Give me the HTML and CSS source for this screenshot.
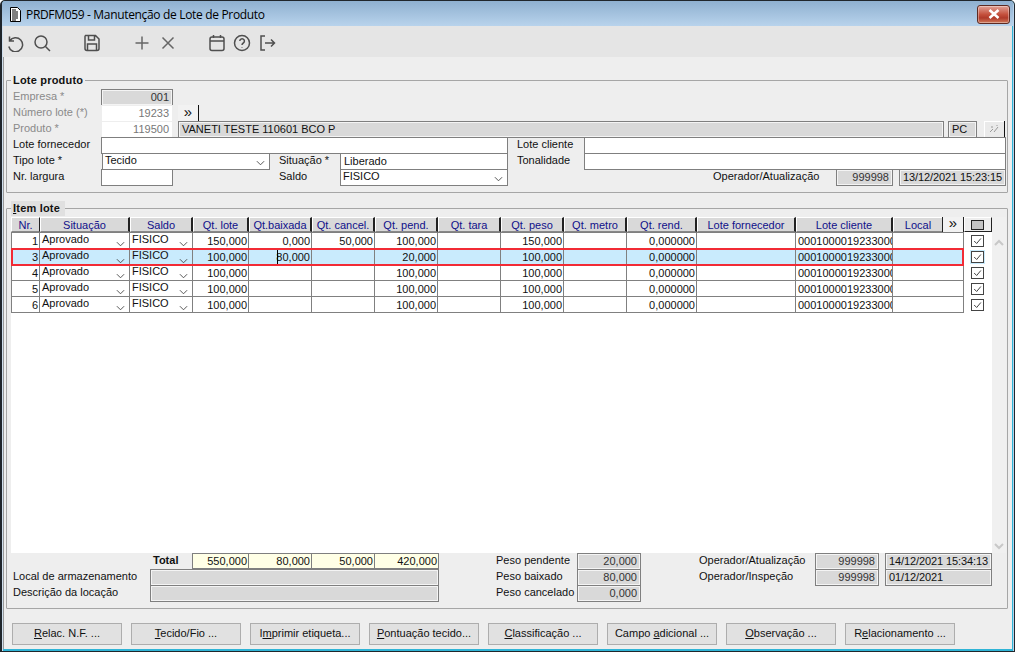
FILE: index.html
```html
<!DOCTYPE html>
<html lang="pt">
<head>
<meta charset="utf-8">
<title>PRDFM059</title>
<link rel="stylesheet" href="styles.css">
</head>
<body>
<div class="window">
  <header class="titlebar">
    <svg class="app-icon" width="14" height="15" viewBox="0 0 14 15"><path d="M2.5.5h7l3 3v11h-10z" fill="#fff" stroke="#000"/><path d="M4 3h4M4 5h6M4 7h6M4 9h6M4 11h6M4 13h4" stroke="#000"/></svg>
    <span class="title-text">PRDFM059 - Manutenção de Lote de Produto</span>
    <span class="close-btn"><svg width="14" height="10" viewBox="0 0 14 10"><path d="M2.5 1l9 8M11.500 1l-9 8" stroke="#fff" stroke-width="2.600"/></svg></span>
  </header>
  <nav class="toolbar">
    <svg class="tool t-undo" viewBox="0 0 18 18"><path d="M3.500 2.500v4.500h4.500M3.700 7a7 7 0 1 1-.9 5.500"/></svg>
    <svg class="tool t-search" viewBox="0 0 18 18"><circle cx="8" cy="8" r="6"/><path d="M12.500 12.500l4.500 4.500"/></svg>
    <svg class="tool t-save" viewBox="0 0 18 18"><path d="M2.500 1.500h10l3.500 3.500v9.500a2 2 0 0 1-2 2h-10a2 2 0 0 1-2-2v-11.500a1.500 1.500 0 0 1 .5-1.500zM5.500 1.500v4.500h6v-4.500M4.500 16.500v-6.500h9v6.500"/></svg>
    <svg class="tool t-plus" viewBox="0 0 18 18"><path d="M9 2.500v13M2.500 9h13"/></svg>
    <svg class="tool t-times" viewBox="0 0 18 18"><path d="M3.500 3.500l11 11M14.500 3.500l-11 11"/></svg>
    <svg class="tool t-cal" viewBox="0 0 18 18"><rect x="2" y="3" width="14" height="13.500" rx="2"/><path d="M2 7h14M5.500 1v3M12.500 1v3"/></svg>
    <svg class="tool t-help" viewBox="0 0 18 18"><circle cx="9" cy="9" r="7.500"/><path d="M6.800 7a2.300 2.300 0 1 1 3.500 2c-.8.500-1.300 1-1.300 2M9 13v.5"/></svg>
    <svg class="tool t-exit" viewBox="0 0 18 18"><path d="M6 2h-4v14h4M6 9h9.500M12 5.500l3.500 3.500-3.500 3.500"/></svg>
  </nav>
  <main class="content">
    <section class="group group-lote">
      <h2 class="legend">Lote produto</h2>
      <div class="form-grid">
        <span class="lbl off c-a r1">Empresa *</span>
        <span class="fld ro num c-b r1">001</span>
        <span class="lbl off c-a r2">Número lote (*)</span>
        <span class="fld plain num dim c-b r2">19233</span>
        <span class="mini-btn c-arrow r2">»</span>
        <span class="lbl off c-a r3">Produto *</span>
        <span class="fld plain num dim c-b r3">119500</span>
        <span class="fld ro c-prod r3">VANETI TESTE 110601 BCO P</span>
        <span class="fld ro c-un r3">PC</span>
        <span class="mini-btn light c-wand r3"><svg width="12" height="10" viewBox="0 0 12 10"><path d="M2 8l3-3M6 8l4-5M4 2v2M9 1v1" stroke="#999" fill="none"/></svg></span>
        <span class="lbl c-a r4">Lote fornecedor</span>
        <span class="fld c-forn r4"></span>
        <span class="lbl c-lc r4">Lote cliente</span>
        <span class="fld c-lcv r4"></span>
        <span class="lbl c-a r5">Tipo lote *</span>
        <span class="fld sel c-tipo r5">Tecido<svg class="chev" viewBox="0 0 10 6"><path d="M1 1l4 4 4-4"/></svg></span>
        <span class="lbl c-sit r5">Situação *</span>
        <span class="fld c-sitv r5">Liberado</span>
        <span class="lbl c-lc r5">Tonalidade</span>
        <span class="fld c-lcv r5"></span>
        <span class="lbl c-a r6">Nr. largura</span>
        <span class="fld c-b r6"></span>
        <span class="lbl c-sit r6">Saldo</span>
        <span class="fld sel c-sitv r6">FISICO<svg class="chev" viewBox="0 0 10 6"><path d="M1 1l4 4 4-4"/></svg></span>
        <span class="lbl c-op r6">Operador/Atualização</span>
        <span class="fld ro num c-opv r6">999998</span>
        <span class="fld ro stamp c-date r6">13/12/2021 15:23:15</span>
      </div>
    </section>

    <section class="group group-item">
      <h2 class="legend focus"><u>I</u>tem lote</h2>
      <div class="grid-area">
        <div class="grid-main">
          <div class="grid-body">
            <div class="row head">
              <span>Nr.</span><span>Situação</span><span>Saldo</span><span>Qt. lote</span><span>Qt.baixada</span><span>Qt. cancel.</span><span>Qt. pend.</span><span>Qt. tara</span><span>Qt. peso</span><span>Qt. metro</span><span>Qt. rend.</span><span>Lote fornecedor</span><span>Lote cliente</span><span class="local-head"><em>Local</em><b>»</b></span>
              <span class="check-head"><i></i></span>
            </div>
            <div class="row data">
              <span class="num">1</span><span class="sl">Aprovado<svg class="chev" viewBox="0 0 10 6"><path d="M1 1l4 4 4-4"/></svg></span><span class="sl">FISICO<svg class="chev" viewBox="0 0 10 6"><path d="M1 1l4 4 4-4"/></svg></span><span class="num">150,000</span><span class="num">0,000</span><span class="num">50,000</span><span class="num">100,000</span><span></span><span class="num">150,000</span><span></span><span class="num">0,000000</span><span></span><span class="clip">0001000019233000</span><span></span>
              <span class="chk"><svg viewBox="0 0 12 12"><path d="M2 6l3 3 5-6"/></svg></span>
            </div>
            <div class="row data selected">
              <span class="num">3</span><span class="sl">Aprovado<svg class="chev" viewBox="0 0 10 6"><path d="M1 1l4 4 4-4"/></svg></span><span class="sl">FISICO<svg class="chev" viewBox="0 0 10 6"><path d="M1 1l4 4 4-4"/></svg></span><span class="num">100,000</span><span class="num edit"><s></s>80,000</span><span></span><span class="num">20,000</span><span></span><span class="num">100,000</span><span></span><span class="num">0,000000</span><span></span><span class="clip">0001000019233000</span><span></span>
              <span class="chk"><svg viewBox="0 0 12 12"><path d="M2 6l3 3 5-6"/></svg></span>
            </div>
            <div class="row data">
              <span class="num">4</span><span class="sl">Aprovado<svg class="chev" viewBox="0 0 10 6"><path d="M1 1l4 4 4-4"/></svg></span><span class="sl">FISICO<svg class="chev" viewBox="0 0 10 6"><path d="M1 1l4 4 4-4"/></svg></span><span class="num">100,000</span><span></span><span></span><span class="num">100,000</span><span></span><span class="num">100,000</span><span></span><span class="num">0,000000</span><span class="dark-bottom"></span><span class="clip">0001000019233000</span><span></span>
              <span class="chk"><svg viewBox="0 0 12 12"><path d="M2 6l3 3 5-6"/></svg></span>
            </div>
            <div class="row data">
              <span class="num">5</span><span class="sl">Aprovado<svg class="chev" viewBox="0 0 10 6"><path d="M1 1l4 4 4-4"/></svg></span><span class="sl">FISICO<svg class="chev" viewBox="0 0 10 6"><path d="M1 1l4 4 4-4"/></svg></span><span class="num">100,000</span><span></span><span></span><span class="num">100,000</span><span></span><span class="num">100,000</span><span></span><span class="num">0,000000</span><span></span><span class="clip">0001000019233000</span><span></span>
              <span class="chk"><svg viewBox="0 0 12 12"><path d="M2 6l3 3 5-6"/></svg></span>
            </div>
            <div class="row data">
              <span class="num">6</span><span class="sl">Aprovado<svg class="chev" viewBox="0 0 10 6"><path d="M1 1l4 4 4-4"/></svg></span><span class="sl">FISICO<svg class="chev" viewBox="0 0 10 6"><path d="M1 1l4 4 4-4"/></svg></span><span class="num">100,000</span><span></span><span></span><span class="num">100,000</span><span></span><span class="num">100,000</span><span></span><span class="num">0,000000</span><span></span><span class="clip">0001000019233000</span><span></span>
              <span class="chk"><svg viewBox="0 0 12 12"><path d="M2 6l3 3 5-6"/></svg></span>
            </div>
          </div>
          <div class="scrollbar">
            <svg viewBox="0 0 12 8"><path d="M2 6l4-4 4 4"/></svg>
            <svg viewBox="0 0 12 8"><path d="M2 2l4 4 4-4"/></svg>
          </div>
        </div>
        <div class="summary">
          <span class="lbl total-lbl">Total</span>
          <span class="tot t1">550,000</span><span class="tot t2">80,000</span><span class="tot t3">50,000</span><span class="tot t4">420,000</span>
          <span class="lbl s-a s2">Local de armazenamento</span>
          <span class="fld ro s-wide s2"></span>
          <span class="lbl s-a s3">Descrição da locação</span>
          <span class="fld ro s-wide s3"></span>
          <span class="lbl s-p s1">Peso pendente</span><span class="fld ro num s-pv s1">20,000</span>
          <span class="lbl s-p s2">Peso baixado</span><span class="fld ro num s-pv s2">80,000</span>
          <span class="lbl s-p s3">Peso cancelado</span><span class="fld ro num s-pv s3">0,000</span>
          <span class="lbl s-o s1">Operador/Atualização</span><span class="fld ro num s-ov s1">999998</span><span class="fld ro stamp s-d s1">14/12/2021 15:34:13</span>
          <span class="lbl s-o s2">Operador/Inspeção</span><span class="fld ro num s-ov s2">999998</span><span class="fld ro stamp s-d s2">01/12/2021</span>
        </div>
      </div>
    </section>

    <footer class="actions">
      <button class="btn"><u>R</u>elac. N.F. ...</button>
      <button class="btn"><u>T</u>ecido/Fio ...</button>
      <button class="btn">I<u>m</u>primir etiqueta...</button>
      <button class="btn"><u>P</u>ontuação tecido...</button>
      <button class="btn"><u>C</u>lassificação ...</button>
      <button class="btn">Campo <u>a</u>dicional ...</button>
      <button class="btn"><u>O</u>bservação ...</button>
      <button class="btn">R<u>e</u>lacionamento ...</button>
    </footer>
  </main>
</div>
</body>
</html>
```
FILE: styles.css
```css
* { box-sizing: border-box; }
html, body { margin: 0; padding: 0; background: #fff; }
body { width: 1015px; height: 652px; overflow: hidden; font: 11px/16px "Liberation Sans", Arial, sans-serif; color: #111; }

.window { width: 1015px; height: 652px; display: flex; flex-direction: column; border: 1px solid #20262c; border-left-width: 2px; border-radius: 5px 5px 0 0; background: #2fb4d6; padding: 0 2px 2px 1px; overflow: hidden; box-shadow: inset 1px 0 0 #cfdfee, inset -1px 0 0 #b9d3ea; }

.titlebar { height: 25px; margin: 0 -1px; padding: 2px 3px 0 6px; display: flex; align-items: center; background: linear-gradient(#8fb0d0, #b8d3ec); flex: none; }
.app-icon { flex: none; }
.title-text { margin-left: 4px; font: 12px/16px "Open Sans", sans-serif; letter-spacing: -.33px; color: #000; flex: 1; }
.close-btn { width: 33px; height: 19px; margin-top: -1px; display: flex; align-items: center; justify-content: center; border: 1px solid #5d2a22; border-radius: 3px; background: linear-gradient(#e2a296, #c4503c 50%, #b03a2a 70%, #cf7a5a); box-shadow: inset 0 0 0 1px rgba(255,255,255,.35); }

.toolbar { height: 31px; flex: none; background: #e5e5e5; display: flex; align-items: center; padding: 2px 0 0 3px; }
.tool { width: 18px; height: 18px; fill: none; stroke: #4f4f4f; stroke-width: 1.500; flex: none; }
.t-search { margin-left: 9px; }
.t-save { margin-left: 32px; }
.t-plus, .t-times { stroke: #666; }
.t-plus { margin-left: 32px; }
.t-times { margin-left: 8px; }
.t-cal { margin-left: 31px; }
.t-help { margin-left: 7px; }
.t-exit { margin-left: 8px; }

.content { flex: 1; background: #eee; padding: 23px 4px 0 3px; display: flex; flex-direction: column; box-shadow: inset 1px 0 0 #999; }

.group { border: 1px solid #a6a6a6; border-radius: 1px; position: relative; flex: none; }
.legend { position: absolute; left: 4px; top: -8px; margin: 0; padding: 0 2px; font: bold 11px/15px "Liberation Sans", sans-serif; background: #eee; color: #111; letter-spacing: .2px; }
.legend.focus { background: #e0e0e0; padding-right: 5px; }
.group-lote { height: 113px; padding-top: 8px; }
.group-item { height: 401px; margin-top: 15px; padding-top: 8px; }

.form-grid { display: grid; margin-left: 6px; grid-template-columns: 88px 72px 5px 21px 71px 9px 61px 168px 9px 67px 129px 123px 57px 6px 45px 4px 29px 7px 22px; grid-template-rows: repeat(6, 16px); }
.r1 { grid-row: 1; } .r2 { grid-row: 2; } .r3 { grid-row: 3; } .r4 { grid-row: 4; } .r5 { grid-row: 5; } .r6 { grid-row: 6; }
.c-a { grid-column: 1; }
.c-b { grid-column: 2; }
.c-arrow { grid-column: 4; }
.c-prod { grid-column: 4 / 16; }
.c-un { grid-column: 17; }
.c-wand { grid-column: 19; margin-right: 1px; }
.c-forn { grid-column: 2 / 9; }
.c-lc { grid-column: 10; }
.c-lcv { grid-column: 11 / 20; }
.c-tipo { grid-column: 2 / 6; margin-left: 1px; }
.c-sit { grid-column: 7; }
.c-sitv { grid-column: 8; }
.c-op { grid-column: 12; }
.c-opv { grid-column: 13; }
.c-date { grid-column: 15 / 20; }

.lbl { white-space: nowrap; color: #111; line-height: 15px; }
.lbl.off { color: #8a8a8a; }

.fld { position: relative; display: block; height: 17px; background: #fff; border: 1px solid #7f7f7f; padding: 0 3px; line-height: 15px; white-space: nowrap; overflow: hidden; }
.fld.sel { line-height: 13px; padding-left: 2px; }
.fld.ro { background: #d9d9d9; box-shadow: inset 0 0 0 1px #f4f4f4; }
.fld.plain { background: #fff; border-color: #eee; }
.fld.stamp { letter-spacing: -.1px; }
.num { text-align: right; }
.dim { color: #777; }
.fld.ro.num { color: #333; }
.chev { position: absolute; width: 9px; height: 6px; fill: none; stroke: #444; stroke-width: 1; right: 4px; bottom: 3px; }

.mini-btn { display: flex; align-items: center; justify-content: center; height: 16px; padding-bottom: 3px; background: #f2f2f2; border-right: 1px solid #111; font-size: 15px; line-height: 13px; }
.mini-btn.light { background: #eaeaea; box-shadow: inset 1px 1px 0 #fff; padding-bottom: 0; }

.grid-area { display: flex; flex-direction: column; margin-left: 4px; }
.grid-main { height: 336px; margin-right: 1px; display: flex; }
.grid-body { width: 981px; flex: none; background: #fff; box-shadow: inset 0 15px 0 #eee; }
.scrollbar { flex: 1; display: flex; flex-direction: column; justify-content: space-between; align-items: center; padding: 22px 0 3px; background: #f0f0f0; }
.scrollbar svg { width: 12px; height: 8px; fill: none; stroke: #c8c8c8; stroke-width: 2; }

.row { display: grid; grid-template-columns: 29px 90px 63px 56px 63px 63px 63px 63px 63px 63px 70px 99px 97px 71px 28px; }
.head { height: 15px; }
.head > span { background: #d9d9d9; color: #10108a; text-align: center; line-height: 14px; border-top: 1px solid #fff; border-left: 1px solid #fff; border-right: 2px solid #222; border-bottom: 1px solid #888; overflow: hidden; white-space: nowrap; }
.head > span:first-child { border-right-width: 1px; }
.head > .local-head { display: flex; padding: 0; border: 0; background: transparent; }
.local-head em { flex: 1; font-style: normal; background: #d9d9d9; border-top: 1px solid #fff; border-bottom: 1px solid #888; border-left: 1px solid #fff; }
.local-head b { width: 22px; font-weight: normal; font-size: 15px; line-height: 12px; color: #111; background: #f2f2f2; border-left: 1px solid #222; border-right: 1px solid #222; }
.head > .check-head { background: #eee; padding: 2px 0 0 6px; border-right-width: 1px; border-bottom-color: #222; }
.check-head i { display: block; width: 13px; height: 10px; background: #c4c4c4; border: 1px solid #222; }

.data { height: 16px; position: relative; }
.data > span { height: 17px; line-height: 16px; background: #fff; border-right: 1px solid #808080; border-top: 1px solid #808080; border-bottom: 1px solid #808080; padding: 0 1px 0 2px; overflow: hidden; white-space: nowrap; position: relative; }
.data > span:first-child { border-left: 1px solid #808080; }
.data > .num { text-align: right; }
.data > .sl { line-height: 13px; }
.data .chev { bottom: 1px; }
.data > .clip { padding-right: 0; }
.data > .dark-bottom { border-bottom-color: #111; }
.data > .chk { background: transparent; border: 0; padding: 3px 0 0 7px; overflow: visible; }
.chk svg { display: block; width: 13px; height: 12px; border: 1px solid #444; background: #fff; fill: none; stroke: #444; stroke-width: 1.200; }

.selected { z-index: 2; }
.selected > span:not(.chk) { background: #c9ebfd; border-top: 0; border-bottom: 0; height: 16px; margin-top: 1px; }
.selected > .sl { background: linear-gradient(90deg, #c9ebfd calc(100% - 18px), #fff 0); }
.selected::after { content: ""; box-sizing: border-box; position: absolute; left: 0; top: 0; width: 953px; height: 18px; border: 2px solid #f22b35; pointer-events: none; }
.selected .chk svg { box-shadow: 0 0 0 1px #c9ebfd; }
.edit s { position: absolute; left: 28px; top: 1px; width: 1px; height: 14px; background: #000; }

.summary { height: 48px; margin-left: 2px; display: grid; grid-template-columns: 137px 42px 57px 63px 63px 64px 57px 81px 64px 58px 116px 64px 6px 107px; grid-template-rows: repeat(3, 16px); }
.s1 { grid-row: 1; } .s2 { grid-row: 2; } .s3 { grid-row: 3; }
.total-lbl { grid-column: 2; grid-row: 1; font-weight: bold; margin-left: 3px; }
.tot { grid-row: 1; height: 16px; line-height: 14px; background: #ffffe6; border: 1px solid #7f7f7f; border-left-width: 0; text-align: right; padding-right: 1px; }
.t1 { grid-column: 3; border-left-width: 1px; }
.t2 { grid-column: 4; } .t3 { grid-column: 5; } .t4 { grid-column: 6; }
.s-a { grid-column: 1 / 3; }
.s-wide { grid-column: 2 / 7; }
.s-p { grid-column: 8; }
.s-pv { grid-column: 9; }
.s-o { grid-column: 11; }
.s-ov { grid-column: 12; }
.s-d { grid-column: 14; }

.actions { flex: 1; display: flex; gap: 9px; padding: 14px 0 0 6px; }
.btn { width: 110px; height: 22px; background: #e1e1e1; border: 1px solid #adadad; font: 11px/14px "Liberation Sans", sans-serif; color: #111; padding: 0 0 2px; }
```
